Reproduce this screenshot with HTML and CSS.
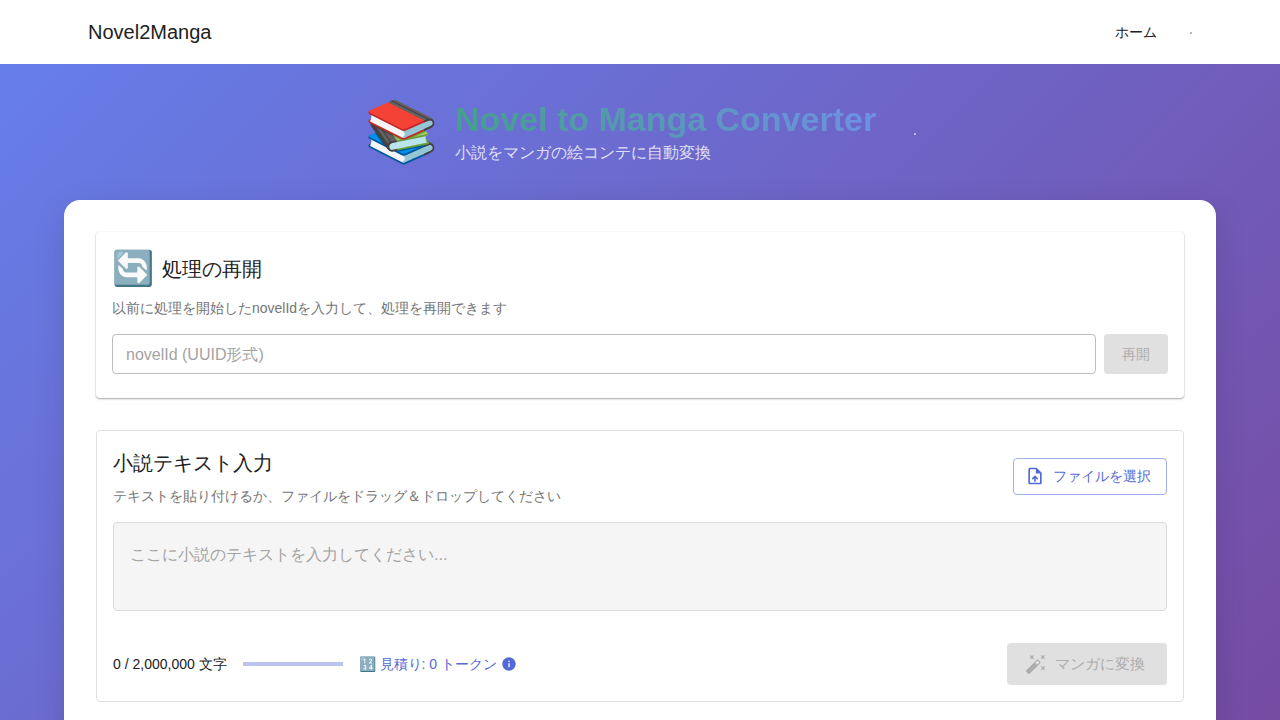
FILE: index.html
```html
<!DOCTYPE html>
<html lang="en">
<head>
<meta charset="utf-8">
<title>Novel2Manga</title>
<link rel="stylesheet" href="styles.css">
</head>
<body>
<header class="appbar">
  <div class="brand">Novel2Manga</div>
  <nav class="nav">
    <a class="nav-home">ホーム</a>
    <span class="nav-dot"></span>
  </nav>
</header>
<main class="page">
  <section class="hero">
    <div class="hero-icon">📚</div>
    <div class="hero-text">
      <h1 class="hero-title">Novel to Manga Converter</h1>
      <p class="hero-sub">小説をマンガの絵コンテに自動変換</p>
    </div>
    <span class="hero-dot"></span>
  </section>
  <div class="sheet">
    <section class="card resume">
      <div class="resume-head">
        <span class="resume-icon">🔄</span>
        <h2 class="resume-title">処理の再開</h2>
      </div>
      <p class="caption resume-caption">以前に処理を開始したnovelIdを入力して、処理を再開できます</p>
      <div class="resume-row">
        <input class="id-input" type="text" placeholder="novelId (UUID形式)" disabled>
        <button class="btn-resume" disabled>再開</button>
      </div>
    </section>
    <section class="card-outline input-card">
      <div class="input-head">
        <div>
          <h2 class="input-title">小説テキスト入力</h2>
          <p class="caption">テキストを貼り付けるか、ファイルをドラッグ＆ドロップしてください</p>
        </div>
        <button class="btn-file">
          <svg class="file-icon" viewBox="0 0 24 24" aria-hidden="true"><path fill="currentColor" d="M14 2H6c-1.1 0-1.99.9-1.99 2L4 20c0 1.1.89 2 1.99 2H18c1.1 0 2-.9 2-2V8l-6-6zm4 18H6V4h7v5h5v11zM8 15.01l1.41 1.41L11 14.84V19h2v-4.16l1.59 1.59L16 15.01 12.01 11 8 15.01z"/></svg>
          <span class="btn-file-label">ファイルを選択</span>
        </button>
      </div>
      <textarea class="novel-text" placeholder="ここに小説のテキストを入力してください..." disabled></textarea>
      <div class="input-foot">
        <span class="count">0 / 2,000,000 文字</span>
        <span class="progress"></span>
        <span class="estimate">🔢 見積り: 0 トークン</span>
        <svg class="info-icon" viewBox="0 0 24 24" aria-hidden="true"><path fill="currentColor" d="M12 2C6.48 2 2 6.48 2 12s4.48 10 10 10 10-4.48 10-10S17.52 2 12 2zm1 15h-2v-6h2v6zm0-8h-2V7h2v2z"/></svg>
        <button class="btn-convert" disabled>
          <svg class="wand-icon" viewBox="0 0 24 24" aria-hidden="true"><path fill="currentColor" d="M7.5 5.6 10 7 8.6 4.5 10 2 7.5 3.4 5 2l1.4 2.5L5 7zm12 9.8L17 14l1.4 2.5L17 19l2.5-1.4L22 19l-1.4-2.5L22 14zM22 2l-2.5 1.4L17 2l1.4 2.5L17 7l2.5-1.4L22 7l-1.4-2.5zm-7.63 5.29a.9959.9959 0 0 0-1.41 0L1.29 18.96c-.39.39-.39 1.02 0 1.41l2.34 2.34c.39.39 1.02.39 1.41 0L16.7 11.05c.39-.39.39-1.02 0-1.41l-2.33-2.35zm-1.03 5.49-2.12-2.12 2.44-2.44 2.12 2.12-2.44 2.44z"/></svg>
          マンガに変換
        </button>
      </div>
    </section>
  </div>
</main>
</body>
</html>
```
FILE: styles.css
```css
* { box-sizing: border-box; }
html, body { margin: 0; height: 720px; overflow: hidden; }
body {
  font-family: "Liberation Sans", sans-serif;
  color: #212121;
  background: #fff;
}
h1, h2, p { margin: 0; font-weight: 400; }
button, input, textarea { font-family: inherit; }

.appbar {
  height: 64px;
  background: #fff;
  display: flex;
  align-items: center;
  justify-content: space-between;
  padding: 0 88px;
}
.brand { font-size: 20px; color: #212121; }
.nav { display: flex; align-items: center; }
.nav-home { font-size: 14px; color: #212121; margin-right: 33px; line-height: 20px; }
.nav-dot { width: 2px; height: 2px; background: #9e9e9e; border-radius: 50%; transform: translateY(1px); }

.page {
  height: 656px;
  overflow: hidden;
  padding: 32px 64px 0;
  background: linear-gradient(135deg, #667eea 0%, #764ba2 100%);
}
.hero {
  display: flex;
  align-items: center;
  justify-content: center;
  gap: 16px;
  height: 72px;
  margin-bottom: 32px;
  padding-right: 40px;
  position: relative;
}
.hero-icon { font-size: 60px; line-height: 72px; }
.hero-title {
  font-size: 34px;
  font-weight: 700;
  line-height: 41px;
  background: linear-gradient(45deg, #43a088 0%, #7090ea 100%);
  -webkit-background-clip: text;
  background-clip: text;
  color: transparent;
}
.hero-sub { font-size: 16px; line-height: 24px; margin-top: 1px; color: rgba(255,255,255,.8); }
.hero-dot {
  position: absolute; left: 850px; top: 37px;
  width: 2px; height: 2px; border-radius: 50%; background: rgba(255,255,255,.7);
}

.sheet {
  background: #fff;
  border-radius: 16px;
  padding: 32px;
  min-height: 600px;
  box-shadow: 0 8px 32px rgba(0,0,0,.12);
}
.card {
  background: #fff;
  border-radius: 4px;
  padding: 16px;
  margin-bottom: 32px;
  box-shadow: 0 1px 2px rgba(0,0,0,.35), 0 0 2px rgba(0,0,0,.06);
  height: 166px;
}
.resume-head { display: flex; align-items: center; gap: 8px; height: 40px; }
.resume-icon { font-size: 34px; line-height: 40px; }
.resume-title { font-size: 20px; line-height: 40px; color: #212121; padding-top: 2px; }
.caption { font-size: 14px; line-height: 20px; color: #757575; }
.resume-caption { margin-top: 10px; }
.resume-row { display: flex; gap: 8px; margin-top: 16px; }
.id-input {
  flex: 1;
  height: 40px;
  padding: 2px 13px 0;
  font-size: 16px;
  background: #fff;
  border: 1px solid #bdbdbd;
  border-radius: 4px;
}
.id-input::placeholder, .novel-text::placeholder { color: #a3a3a3; opacity: 1; }
.btn-resume {
  width: 64px; height: 40px;
  padding: 2px 0 0;
  background: #e0e0e0; color: #adadad;
  border: 0; border-radius: 4px;
  font-size: 14px;
}

.card-outline {
  border: 1px solid #e0e0e0;
  border-radius: 4px;
  padding: 16px;
  height: 272px;
  background: #fff;
}
.input-head { display: flex; justify-content: space-between; align-items: center; height: 60px; }
.input-title { font-size: 20px; line-height: 32px; margin-top: -1px; color: #212121; }
.input-head .caption { margin-top: 7px; }
.btn-file {
  display: flex; align-items: center; gap: 8px;
  width: 154px; height: 37px;
  padding: 0 15px 0 11px;
  margin-top: -2px;
  background: #fff; color: #5369d6;
  border: 1px solid #a3b0ec; border-radius: 4px;
  font-size: 14px;
  white-space: nowrap;
}
.btn-file-label { padding-top: 2px; }
.file-icon { width: 20px; height: 20px; flex: none; }
.novel-text {
  display: block;
  width: 100%;
  height: 89px;
  margin-top: 15px;
  padding: 21px 16px;
  font-size: 16px;
  line-height: 22px;
  background: #f5f5f5;
  border: 1px solid #dcdcdc;
  border-radius: 4px;
  resize: none;
}
.input-foot { display: flex; align-items: center; margin-top: 32px; height: 42px; }
.count { font-size: 14px; padding-top: 2px; color: #212121; }
.progress { width: 100px; height: 4px; margin-left: 16px; background: #bcc4ee; }
.estimate { font-size: 14px; padding-top: 2px; color: #5369d6; margin-left: 16px; }
.info-icon { width: 16px; height: 16px; margin-left: 4px; color: #5369d6; }
.btn-convert {
  margin-left: auto;
  display: flex; align-items: center; justify-content: center; gap: 8px;
  width: 160px; height: 42px;
  padding: 0 4px 0 0;
  background: #e0e0e0; color: #adadad;
  border: 0; border-radius: 4px;
  font-size: 15px;
}
.wand-icon { width: 22px; height: 22px; }
```
